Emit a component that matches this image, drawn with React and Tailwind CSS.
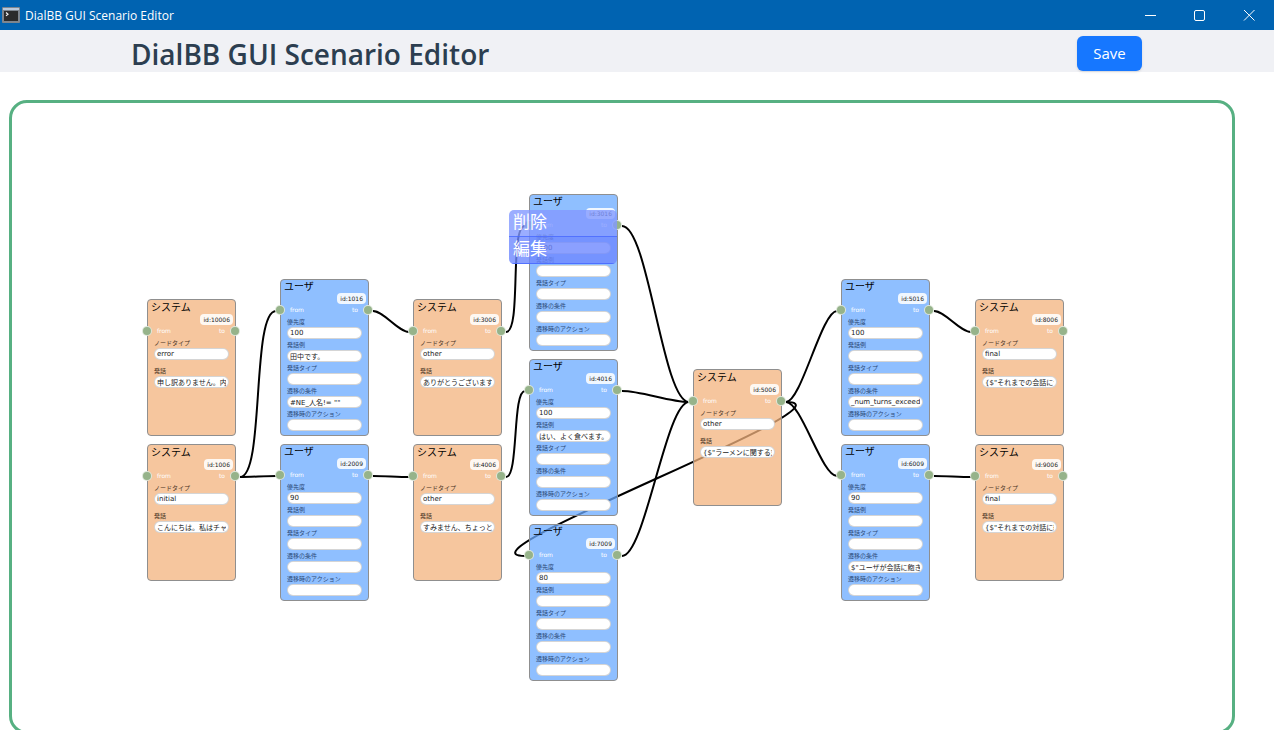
import React from "react";

const NODES = [
  { id: "10006", kind: "system", x: 135, y: 196, values: ["error", "申し訳ありません。内部エラーです"] },
  { id: "1006", kind: "system", x: 135, y: 341, values: ["initial", "こんにちは。私はチャットボット"] },
  { id: "1016", kind: "user", x: 268, y: 176, values: ["100", "田中です。", "", "#NE_人名!= \"\"", ""] },
  { id: "2009", kind: "user", x: 268, y: 341, values: ["90", "", "", "", ""] },
  { id: "3006", kind: "system", x: 401, y: 196, values: ["other", "ありがとうございます"] },
  { id: "4006", kind: "system", x: 401, y: 341, values: ["other", "すみません、ちょっと"] },
  { id: "3016", kind: "user", x: 517, y: 91, values: ["100", "", "", "", ""] },
  { id: "4016", kind: "user", x: 517, y: 256, values: ["100", "はい、よく食べます。", "", "", ""] },
  { id: "7009", kind: "user", x: 517, y: 421, values: ["80", "", "", "", ""] },
  { id: "5006", kind: "system", x: 681, y: 266, values: ["other", "{$\"ラーメンに関する対話"] },
  { id: "5016", kind: "user", x: 829, y: 176, values: ["100", "", "", "_num_turns_exceeds", ""] },
  { id: "6009", kind: "user", x: 829, y: 341, values: ["90", "", "", "$\"ユーザが会話に飽きた", ""] },
  { id: "8006", kind: "system", x: 963, y: 196, values: ["final", "{$\"それまでの会話につい"] },
  { id: "9006", kind: "system", x: 963, y: 341, values: ["final", "{$\"それまでの対話に続く"] },
];

const LINKS = [
  ["1006", "1016"],
  ["1006", "2009"],
  ["1016", "3006"],
  ["2009", "4006"],
  ["3006", "3016"],
  ["4006", "4016"],
  ["3016", "5006"],
  ["4016", "5006"],
  ["7009", "5006"],
  ["5006", "5016"],
  ["5006", "6009"],
  ["5006", "7009"],
  ["5016", "8006"],
  ["6009", "9006"],
];

const KINDS = {
  system: {
    title: "システム",
    box: "h-[137px] bg-[#f3b37ebf] pt-px",
    label: "text-[#4a3424]",
    labels: ["ノードタイプ", "発話"],
    fields: "gap-[5px]",
    socketY: 33,
  },
  user: {
    title: "ユーザ",
    box: "h-[157px] bg-[#6aaaffbf]",
    label: "text-[#2c4a78]",
    labels: ["優先度", "発話例", "発話タイプ", "遷移の条件", "遷移時のアクション"],
    fields: "gap-0",
    socketY: 32,
  },
};

const WIDTH = 89;

function linkPath([from, to]) {
  const a = NODES.find((n) => n.id === from);
  const b = NODES.find((n) => n.id === to);
  const x1 = a.x + WIDTH + 4;
  const y1 = a.y + KINDS[a.kind].socketY;
  const x2 = b.x - 4;
  const y2 = b.y + KINDS[b.kind].socketY;
  const h = Math.max(Math.abs(y2 - y1) / 2, Math.abs(x2 - x1)) * 0.3;
  return `M${x1} ${y1}C${x1 + h} ${y1} ${x2 - h} ${y2} ${x2} ${y2}`;
}

function Socket() {
  return <span className="size-[10px] shrink-0 rounded-full border border-[#ffffffb0] bg-[#96b38a]" />;
}

function Node({ node }) {
  const kind = KINDS[node.kind];
  return (
    <section
      className={`absolute flex w-[89px] flex-col rounded-[4px] border border-[#8f8f8f] ${kind.box}`}
      style={{ left: node.x, top: node.y }}
    >
      <h2 className="h-[13px] pl-[3px] text-[10px] leading-[13px] text-black">{kind.title}</h2>
      <p className="mr-[2px] h-[11px] self-end rounded-[4px] bg-[#ffffffdd] px-[3px] text-[6px] leading-[11px] text-[#222]">
        id:{node.id}
      </p>
      <div className="-mr-[5px] -ml-[6px] flex h-[12px] items-center text-[6px] leading-[12px] text-white">
        <Socket />
        <span className="ml-[5px]">from</span>
        <span className="mr-[5px] ml-auto">to</span>
        <Socket />
      </div>
      <div className={`flex flex-col px-[6px] ${kind.fields}`}>
        {kind.labels.map((label, i) => (
          <label key={label} className={`flex flex-col text-[6px] leading-[11px] ${kind.label}`}>
            {label}
            <input
              type="text"
              defaultValue={node.values[i]}
              className="h-[12px] w-full rounded-full border border-[#0000002a] bg-white px-[2px] text-[7px] leading-[10px] text-[#222]"
            />
          </label>
        ))}
      </div>
    </section>
  );
}

export default function App() {
  return (
    <div className="h-screen overflow-hidden bg-white font-['Open_Sans','Noto_Sans_CJK_JP',sans-serif]">
      <div className="flex h-[30px] items-center bg-[#0063b1] pr-px pl-[2px] text-white">
        <svg className="h-[16px] w-[18px]" viewBox="0 0 18 16" aria-hidden="true">
          <rect x="0" y="0" width="18" height="16" rx="1" fill="#7d858e" />
          <rect x="1" y="1" width="16" height="2" fill="#b9c9dc" />
          <rect x="2" y="4" width="14" height="10" fill="#2b2b2b" />
          <path d="M4 5.500l2 1.700-2 1.700" fill="none" stroke="#eee" strokeWidth="1.200" />
        </svg>
        <span className="ml-[5px] pt-px text-[12px]">DialBB GUI Scenario Editor</span>
        <div className="ml-auto flex">
          <button type="button" aria-label="Minimize" className="flex h-[30px] w-[49px] items-center justify-center">
            <svg width="12" height="12" viewBox="0 0 12 12" stroke="#fff"><path d="M0 6.500h11" /></svg>
          </button>
          <button type="button" aria-label="Maximize" className="flex h-[30px] w-[49px] items-center justify-center">
            <svg width="12" height="12" viewBox="0 0 12 12" stroke="#fff" fill="none"><rect x=".5" y="1.500" width="10" height="10" rx="1.500" /></svg>
          </button>
          <button type="button" aria-label="Close" className="flex h-[30px] w-[49px] items-center justify-center">
            <svg width="12" height="12" viewBox="0 0 12 12" stroke="#fff"><path d="M1 1l10.500 10.500M11.500 1l-10.500 10.500" /></svg>
          </button>
        </div>
      </div>

      <header className="flex h-[42px] items-center justify-between bg-[#f0f1f5] pr-[132px] pl-[131px]">
        <h1 className="pt-[6px] text-[28px] leading-[36px] font-semibold text-[#2c3e50]">DialBB GUI Scenario Editor</h1>
        <button type="button" className="mt-[4px] h-[35px] w-[65px] rounded-[6px] bg-[#1677ff] text-[15px] text-white shadow-sm">
          Save
        </button>
      </header>

      <main className="mt-[28px] mr-[39px] ml-[9px]">
        <div className="relative h-[634px] overflow-hidden rounded-[18px] border-3 border-[#57b082] font-['DejaVu_Sans','Noto_Sans_CJK_JP',sans-serif]">
          <svg className="absolute inset-0 size-full" fill="none" stroke="#000" strokeWidth="2" aria-hidden="true">
            {LINKS.map((link) => (
              <path key={link.join()} d={linkPath(link)} />
            ))}
          </svg>
          {NODES.map((node) => (
            <Node key={node.id} node={node} />
          ))}
          <div className="absolute top-[107px] left-[497px] flex w-[108px] flex-col overflow-hidden rounded-[5px] text-[17px] text-white">
            <button type="button" className="h-[27px] border-b border-[#4567ffcc] bg-[#8299ffcc] pb-[2px] pl-[4px] text-left leading-[24px]">
              削除
            </button>
            <button type="button" className="h-[27px] border-b border-[#4567ffcc] bg-[#6e88ffcc] pb-[2px] pl-[4px] text-left leading-[24px]">
              編集
            </button>
          </div>
        </div>
      </main>
    </div>
  );
}
